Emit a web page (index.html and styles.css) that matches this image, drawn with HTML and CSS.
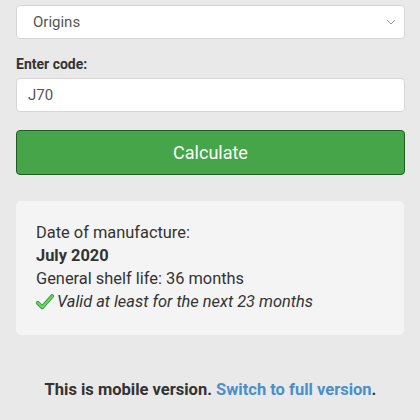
FILE: index.html
```html
<!DOCTYPE html>
<html lang="en">
<head>
  <meta charset="UTF-8">
  <title>Batch code check</title>
  <link rel="stylesheet" href="styles.css">
</head>
<body>
  <form class="form">
    <select class="field select">
      <option>Origins</option>
    </select>

    <label class="label" for="code">Enter code:</label>
    <input class="field input" type="text" id="code" value="J70">

    <button class="btn" type="button">Calculate</button>
  </form>

  <div class="result">
    <div>Date of manufacture:</div>
    <div class="date">July 2020</div>
    <div>General shelf life: 36 months</div>
    <div class="valid">
      <svg class="check" width="18" height="17" viewBox="0 0 20 18">
        <path d="M2 10.5 L7 15.5 L18 3" fill="none" stroke="#2f9a3a" stroke-width="4.2" stroke-linecap="round" stroke-linejoin="round"/>
        <path d="M2 10.5 L7 15.5 L18 3" fill="none" stroke="#6cd46a" stroke-width="2.4" stroke-linecap="round" stroke-linejoin="round"/>
      </svg>
      <i>Valid at least for the next 23 months</i>
    </div>
  </div>

  <p class="footer">This is mobile version. <a href="#">Switch to full version</a>.</p>
</body>
</html>
```

FILE: styles.css
```css
body {
  margin: 0;
  padding: 5px 15px 0 16px;
  background: #e9e9e9;
  font-family: Roboto, "Liberation Sans", sans-serif;
  color: #333;
}
.form {
  display: flex;
  flex-direction: column;
}
.field {
  box-sizing: border-box;
  width: 100%;
  height: 34px;
  border: 1px solid #d6d6d6;
  border-radius: 4px;
  background: #fff;
  font-family: inherit;
  font-size: 15px;
  color: #555;
}
.select {
  appearance: none;
  padding: 0 12px 0 16px;
  background: #fff url("data:image/svg+xml,%3Csvg xmlns='http://www.w3.org/2000/svg' width='10' height='6'%3E%3Cpath d='M1 1l4 4 4-4' fill='none' stroke='%23999' stroke-width='1'/%3E%3C/svg%3E") no-repeat right 8px center;
}
.label {
  margin: 17px 0 6px;
  font-size: 14px;
  font-weight: bold;
}
.input {
  padding: 0 11px;
}
.btn {
  margin-top: 18px;
  height: 45px;
  border: 1px solid #1f5e22;
  border-radius: 4px;
  background: #46a549;
  color: #fff;
  font-family: inherit;
  font-size: 18px;
}
.result {
  margin: 26px 1px 0 0;
  padding: 20px 20px 22px;
  background: #f4f4f4;
  border-radius: 5px;
  font-size: 16.4px;
  line-height: 23px;
}
.date {
  font-weight: bold;
}
.valid {
  display: flex;
  align-items: center;
  gap: 3px;
}
.footer {
  margin: 45px 0 0;
  text-align: center;
  font-weight: bold;
  font-size: 16.5px;
}
.footer a {
  color: #4a8fcb;
  text-decoration: none;
}
```
